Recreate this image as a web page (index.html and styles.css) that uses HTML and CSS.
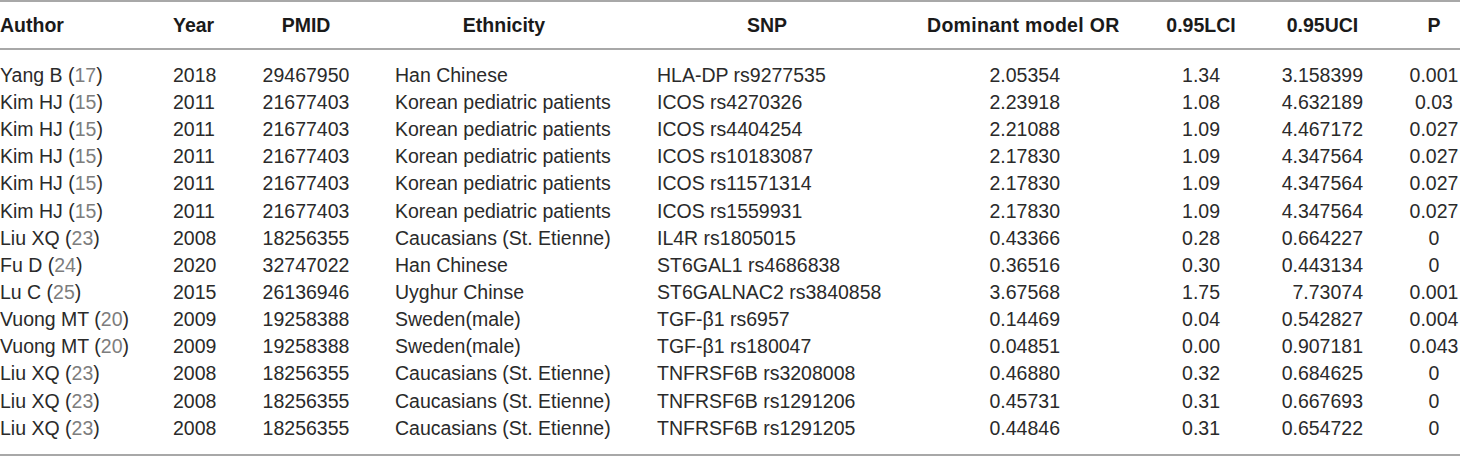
FILE: index.html
```html
<!DOCTYPE html>
<html>
<head>
<meta charset="utf-8">
<link rel="stylesheet" href="styles.css">
</head>
<body>
<table class="data">
  <colgroup>
    <col class="c-author"><col class="c-year"><col class="c-pmid"><col class="c-eth"><col class="c-snp"><col class="c-or"><col class="c-lci"><col class="c-uci"><col class="c-p">
  </colgroup>
  <thead>
    <tr>
      <th class="h-author">Author</th>
      <th class="h-year">Year</th>
      <th class="h-pmid">PMID</th>
      <th class="h-eth">Ethnicity</th>
      <th class="h-snp">SNP</th>
      <th class="h-or">Dominant model OR</th>
      <th class="h-lci">0.95LCI</th>
      <th class="h-uci">0.95UCI</th>
      <th class="h-p">P</th>
    </tr>
  </thead>
  <tbody>
    <tr><td class="d-author">Yang B (<span class="ref">17</span>)</td><td class="d-year">2018</td><td class="d-pmid">29467950</td><td class="d-eth">Han Chinese</td><td class="d-snp">HLA-DP rs9277535</td><td class="d-or">2.05354</td><td class="d-lci">1.34</td><td class="d-uci">3.158399</td><td class="d-p">0.001</td></tr>
    <tr><td class="d-author">Kim HJ (<span class="ref">15</span>)</td><td class="d-year">2011</td><td class="d-pmid">21677403</td><td class="d-eth">Korean pediatric patients</td><td class="d-snp">ICOS rs4270326</td><td class="d-or">2.23918</td><td class="d-lci">1.08</td><td class="d-uci">4.632189</td><td class="d-p">0.03</td></tr>
    <tr><td class="d-author">Kim HJ (<span class="ref">15</span>)</td><td class="d-year">2011</td><td class="d-pmid">21677403</td><td class="d-eth">Korean pediatric patients</td><td class="d-snp">ICOS rs4404254</td><td class="d-or">2.21088</td><td class="d-lci">1.09</td><td class="d-uci">4.467172</td><td class="d-p">0.027</td></tr>
    <tr><td class="d-author">Kim HJ (<span class="ref">15</span>)</td><td class="d-year">2011</td><td class="d-pmid">21677403</td><td class="d-eth">Korean pediatric patients</td><td class="d-snp">ICOS rs10183087</td><td class="d-or">2.17830</td><td class="d-lci">1.09</td><td class="d-uci">4.347564</td><td class="d-p">0.027</td></tr>
    <tr><td class="d-author">Kim HJ (<span class="ref">15</span>)</td><td class="d-year">2011</td><td class="d-pmid">21677403</td><td class="d-eth">Korean pediatric patients</td><td class="d-snp">ICOS rs11571314</td><td class="d-or">2.17830</td><td class="d-lci">1.09</td><td class="d-uci">4.347564</td><td class="d-p">0.027</td></tr>
    <tr><td class="d-author">Kim HJ (<span class="ref">15</span>)</td><td class="d-year">2011</td><td class="d-pmid">21677403</td><td class="d-eth">Korean pediatric patients</td><td class="d-snp">ICOS rs1559931</td><td class="d-or">2.17830</td><td class="d-lci">1.09</td><td class="d-uci">4.347564</td><td class="d-p">0.027</td></tr>
    <tr><td class="d-author">Liu XQ (<span class="ref">23</span>)</td><td class="d-year">2008</td><td class="d-pmid">18256355</td><td class="d-eth">Caucasians (St. Etienne)</td><td class="d-snp">IL4R rs1805015</td><td class="d-or">0.43366</td><td class="d-lci">0.28</td><td class="d-uci">0.664227</td><td class="d-p">0</td></tr>
    <tr><td class="d-author">Fu D (<span class="ref">24</span>)</td><td class="d-year">2020</td><td class="d-pmid">32747022</td><td class="d-eth">Han Chinese</td><td class="d-snp">ST6GAL1 rs4686838</td><td class="d-or">0.36516</td><td class="d-lci">0.30</td><td class="d-uci">0.443134</td><td class="d-p">0</td></tr>
    <tr><td class="d-author">Lu C (<span class="ref">25</span>)</td><td class="d-year">2015</td><td class="d-pmid">26136946</td><td class="d-eth">Uyghur Chinse</td><td class="d-snp">ST6GALNAC2 rs3840858</td><td class="d-or">3.67568</td><td class="d-lci">1.75</td><td class="d-uci">7.73074</td><td class="d-p">0.001</td></tr>
    <tr><td class="d-author">Vuong MT (<span class="ref">20</span>)</td><td class="d-year">2009</td><td class="d-pmid">19258388</td><td class="d-eth">Sweden(male)</td><td class="d-snp">TGF-β1 rs6957</td><td class="d-or">0.14469</td><td class="d-lci">0.04</td><td class="d-uci">0.542827</td><td class="d-p">0.004</td></tr>
    <tr><td class="d-author">Vuong MT (<span class="ref">20</span>)</td><td class="d-year">2009</td><td class="d-pmid">19258388</td><td class="d-eth">Sweden(male)</td><td class="d-snp">TGF-β1 rs180047</td><td class="d-or">0.04851</td><td class="d-lci">0.00</td><td class="d-uci">0.907181</td><td class="d-p">0.043</td></tr>
    <tr><td class="d-author">Liu XQ (<span class="ref">23</span>)</td><td class="d-year">2008</td><td class="d-pmid">18256355</td><td class="d-eth">Caucasians (St. Etienne)</td><td class="d-snp">TNFRSF6B rs3208008</td><td class="d-or">0.46880</td><td class="d-lci">0.32</td><td class="d-uci">0.684625</td><td class="d-p">0</td></tr>
    <tr><td class="d-author">Liu XQ (<span class="ref">23</span>)</td><td class="d-year">2008</td><td class="d-pmid">18256355</td><td class="d-eth">Caucasians (St. Etienne)</td><td class="d-snp">TNFRSF6B rs1291206</td><td class="d-or">0.45731</td><td class="d-lci">0.31</td><td class="d-uci">0.667693</td><td class="d-p">0</td></tr>
    <tr><td class="d-author">Liu XQ (<span class="ref">23</span>)</td><td class="d-year">2008</td><td class="d-pmid">18256355</td><td class="d-eth">Caucasians (St. Etienne)</td><td class="d-snp">TNFRSF6B rs1291205</td><td class="d-or">0.44846</td><td class="d-lci">0.31</td><td class="d-uci">0.654722</td><td class="d-p">0</td></tr>
  </tbody>
</table>
</body>
</html>
```

FILE: styles.css
```css
html, body {
  margin: 0;
  padding: 0;
  background: #ffffff;
}

.data {
  width: 1460px;
  border-collapse: collapse;
  table-layout: fixed;
  font-family: "Liberation Sans", Arial, sans-serif;
  font-size: 19.5px;
  color: #2a2a2a;
  border-top: 2px solid #a8a8a8;
  border-bottom: 2px solid #a8a8a8;
}

.c-author { width: 173px; }
.c-year { width: 77px; }
.c-pmid { width: 112px; }
.c-eth { width: 295px; }
.c-snp { width: 220px; }
.c-or { width: 223px; }
.c-lci { width: 160px; }
.c-uci { width: 140px; }
.c-p { width: 60px; }

.data th, .data td {
  padding: 0;
  white-space: nowrap;
  vertical-align: middle;
}

.data thead tr {
  height: 48px;
  border-bottom: 2px solid #a8a8a8;
}

.data th {
  font-weight: bold;
  font-size: 19.5px;
  color: #1a1a1a;
  text-align: center;
}

.data th.h-author, .data th.h-year { text-align: left; }
.data th.h-eth { padding-right: 11px; }
.data th.h-or { text-align: left; padding-left: 50px; letter-spacing: 0.3px; }
.data th.h-lci { padding-left: 42px; }
.data th.h-uci { padding-right: 15px; }
.data th.h-p { padding-left: 8px; }

.data tbody tr {
  height: 27.15px;
  line-height: 27px;
}

.data tbody tr:first-child td { padding-top: 12px; }
.data tbody tr:last-child td { padding-bottom: 12px; }

.data td.d-author, .data td.d-year { text-align: left; }
.data td.d-pmid { text-align: center; }
.data td.d-eth { padding-left: 33px; }
.data td.d-snp { text-align: left; }
.data td.d-or { text-align: right; padding-right: 40px; }
.data td.d-lci { text-align: right; padding-right: 40px; }
.data td.d-uci { text-align: right; padding-right: 37px; }
.data td.d-p { text-align: center; padding-left: 8px; }

.ref { color: #7d7d7d; }
```
